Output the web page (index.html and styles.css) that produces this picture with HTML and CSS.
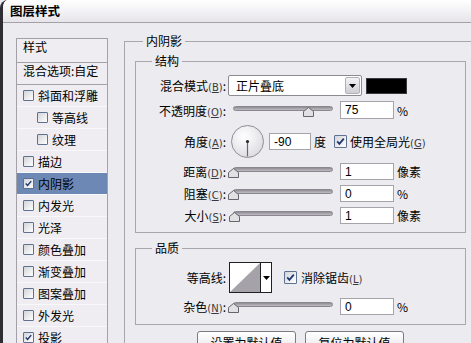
FILE: index.html
```html
<!DOCTYPE html>
<html lang="zh-CN">
<head>
    <meta charset="UTF-8">
    <meta name="viewport" content="width=device-width, initial-scale=1.0">
    <title>图层样式</title>
    <link rel="stylesheet" href="styles.css">
</head>
<body>
    <div class="dialog">
        <div class="titlebar">图层样式</div>
        <div class="content">
            <ul class="style-list">
                <li class="list-head">样式</li>
                <li class="list-blend">混合选项:自定</li>
                <li><span class="check"></span>斜面和浮雕</li>
                <li class="sub"><span class="check"></span>等高线</li>
                <li class="sub"><span class="check"></span>纹理</li>
                <li><span class="check"></span>描边</li>
                <li class="selected"><span class="check"><svg viewBox="0 0 11 11"><path d="M2.2 5.4 L4.4 7.8 L8.8 2.6" /></svg></span>内阴影</li>
                <li><span class="check"></span>内发光</li>
                <li><span class="check"></span>光泽</li>
                <li><span class="check"></span>颜色叠加</li>
                <li><span class="check"></span>渐变叠加</li>
                <li><span class="check"></span>图案叠加</li>
                <li><span class="check"></span>外发光</li>
                <li><span class="check"><svg viewBox="0 0 11 11"><path d="M2.2 5.4 L4.4 7.8 L8.8 2.6" /></svg></span>投影</li>
            </ul>

            <div class="panel">
                <fieldset class="group outer">
                    <legend>内阴影</legend>

                    <fieldset class="group structure">
                        <legend>结构</legend>

                        <div class="row row-blend">
                            <span class="lbl">混合模式<span class="key">(<u>B</u>)</span>:</span>
                            <div class="select">
                                <span class="select-text">正片叠底</span>
                                <span class="select-btn"><svg viewBox="0 0 7 4"><path d="M0 0 H7 L3.5 4 Z" /></svg></span>
                            </div>
                            <span class="swatch"></span>
                        </div>

                        <div class="row row-slider row-opacity">
                            <span class="lbl">不透明度<span class="key">(<u>O</u>)</span>:</span>
                            <div class="slider">
                                <span class="track"></span>
                                <span class="thumb" style="left: 75px"><svg viewBox="0 0 11 10"><path d="M5.5 0.5 L10.5 4.5 V9.5 H0.5 V4.5 Z" /></svg></span>
                            </div>
                            <input class="field" type="text" value="75">
                            <span class="unit">%</span>
                        </div>

                        <div class="row row-angle">
                            <span class="lbl">角度<span class="key">(<u>A</u>)</span>:</span>
                            <svg class="dial" viewBox="0 0 33 33">
                                <defs>
                                    <radialGradient id="dialFill" cx="0.4" cy="0.35" r="0.7">
                                        <stop offset="0" stop-color="#ffffff" />
                                        <stop offset="1" stop-color="#dcdae0" />
                                    </radialGradient>
                                </defs>
                                <circle cx="16.5" cy="16.5" r="16" fill="url(#dialFill)" stroke="#8f8d94" />
                                <line x1="16.5" y1="16.5" x2="16.5" y2="31.5" stroke="#6a686e" stroke-width="1.2" />
                                <circle cx="16.5" cy="16.5" r="1.6" fill="#2a2a2e" />
                            </svg>
                            <input class="field field-angle" type="text" value="-90">
                            <span class="unit">度</span>
                            <span class="check check-lg"><svg viewBox="0 0 11 11"><path d="M2.2 5.4 L4.4 7.8 L8.8 2.6" /></svg></span>
                            <span class="check-label">使用全局光<span class="key">(<u>G</u>)</span></span>
                        </div>

                        <div class="row row-slider row-small">
                            <span class="lbl">距离<span class="key">(<u>D</u>)</span>:</span>
                            <div class="slider">
                                <span class="track"></span>
                                <span class="thumb" style="left: 0px"><svg viewBox="0 0 11 10"><path d="M5.5 0.5 L10.5 4.5 V9.5 H0.5 V4.5 Z" /></svg></span>
                            </div>
                            <input class="field" type="text" value="1">
                            <span class="unit">像素</span>
                        </div>

                        <div class="row row-slider row-small">
                            <span class="lbl">阻塞<span class="key">(<u>C</u>)</span>:</span>
                            <div class="slider">
                                <span class="track"></span>
                                <span class="thumb" style="left: 0px"><svg viewBox="0 0 11 10"><path d="M5.5 0.5 L10.5 4.5 V9.5 H0.5 V4.5 Z" /></svg></span>
                            </div>
                            <input class="field" type="text" value="0">
                            <span class="unit">%</span>
                        </div>

                        <div class="row row-slider row-small">
                            <span class="lbl">大小<span class="key">(<u>S</u>)</span>:</span>
                            <div class="slider">
                                <span class="track"></span>
                                <span class="thumb" style="left: 1px"><svg viewBox="0 0 11 10"><path d="M5.5 0.5 L10.5 4.5 V9.5 H0.5 V4.5 Z" /></svg></span>
                            </div>
                            <input class="field" type="text" value="1">
                            <span class="unit">像素</span>
                        </div>
                    </fieldset>

                    <fieldset class="group quality">
                        <legend>品质</legend>

                        <div class="row row-contour">
                            <span class="lbl">等高线:</span>
                            <div class="contour">
                                <svg class="contour-curve" viewBox="0 0 30 29"><path d="M0 29 L30 0 V29 Z" /></svg>
                                <span class="contour-btn"><svg viewBox="0 0 7 4"><path d="M0 0 H7 L3.5 4 Z" /></svg></span>
                            </div>
                            <span class="check check-lg"><svg viewBox="0 0 11 11"><path d="M2.2 5.4 L4.4 7.8 L8.8 2.6" /></svg></span>
                            <span class="check-label">消除锯齿<span class="key">(<u>L</u>)</span></span>
                        </div>

                        <div class="row row-slider row-small">
                            <span class="lbl">杂色<span class="key">(<u>N</u>)</span>:</span>
                            <div class="slider">
                                <span class="track"></span>
                                <span class="thumb" style="left: 0px"><svg viewBox="0 0 11 10"><path d="M5.5 0.5 L10.5 4.5 V9.5 H0.5 V4.5 Z" /></svg></span>
                            </div>
                            <input class="field" type="text" value="0">
                            <span class="unit">%</span>
                        </div>
                    </fieldset>

                    <div class="buttons">
                        <button>设置为默认值</button>
                        <button>复位为默认值</button>
                    </div>
                </fieldset>
            </div>
        </div>
    </div>
</body>
</html>
```

FILE: styles.css
```css
* { box-sizing: border-box; }
html, body { margin: 0; padding: 0; }
body {
    width: 471px;
    height: 343px;
    overflow: hidden;
    background: #ecebef;
    font-family: "Noto Sans CJK SC", "Noto Sans", sans-serif;
    font-size: 12px;
    color: #000;
}
.dialog {
    height: 343px;
    overflow: hidden;
    border-left: 3px solid #2f2d31;
    border-top-left-radius: 8px;
    background: #ecebef;
}
.titlebar {
    height: 23px;
    padding-left: 7px;
    line-height: 22px;
    font-size: 12.5px;
    font-weight: bold;
    background: linear-gradient(#ffffff, #e6e4e9);
    border-bottom: 1px solid #a4a2a8;
}
.content {
    display: flex;
    align-items: flex-start;
    padding: 10px 0 0 13px;
}

/* left list */
.style-list {
    list-style: none;
    margin: 5px 0 0 0;
    padding: 0;
    width: 92px;
    height: 320px;
    flex: none;
    border: 1px solid #a3a1a7;
    background: #efedf1;
}
.style-list li {
    display: flex;
    align-items: center;
    height: 22px;
    padding-left: 6px;
    border-bottom: 1px solid #f8f7fa;
    white-space: nowrap;
}
.style-list li.sub { padding-left: 20px; }
.style-list li.list-head {
    height: 24px;
    align-items: flex-start;
    line-height: 15px;
    border-bottom: 1px solid #a3a1a7;
}
.style-list li.list-blend {
    align-items: flex-start;
    line-height: 16px;
    border-bottom: 1px solid #a3a1a7;
}
.style-list li.selected { background: #6d88b4; }

.check {
    display: inline-block;
    flex: none;
    width: 11px;
    height: 11px;
    margin-right: 4px;
    border: 1px solid #5f7190;
    border-radius: 1px;
    background: linear-gradient(135deg, #d3d4da, #ffffff);
}
.check svg { display: block; width: 100%; height: 100%; }
.check path { fill: none; stroke: #20386e; stroke-width: 1.8; }
.check-lg { width: 13px; height: 13px; }

/* right panel */
.panel { margin-left: 16px; flex: none; }
.group {
    margin: 0;
    min-width: 0;
    border: 1px solid #a9a7ad;
}
.group legend {
    padding: 0 3px;
    line-height: 16px;
    font-size: 12px;
}
.outer {
    width: 358px;
    height: 330px;
    padding: 4px 15px 0 10px;
}
.outer > legend { margin-left: 8px; }
.structure, .quality {
    width: 331px;
    padding: 6px 0 8px 0;
}
.structure > legend, .quality > legend { margin-left: 16px; }
.quality { margin-top: 7px; padding-bottom: 9px; }

.row {
    display: flex;
    align-items: center;
    white-space: nowrap;
}
.lbl {
    width: 90px;
    flex: none;
    text-align: right;
    margin-right: 2px;
}
.key {
    font-family: "DejaVu Sans", sans-serif;
    font-size: 10px;
    color: #3a3a3e;
}
.row-blend { height: 21px; }
.row-opacity { height: 18px; margin-top: 5px; }
.row-angle { height: 31px; margin-top: 7px; }
.row-small { height: 17px; margin-top: 5px; }
.row-angle + .row-small { margin-top: 6px; }

.select {
    display: flex;
    align-items: stretch;
    width: 134px;
    height: 21px;
    border: 1px solid #8d8b92;
    border-radius: 2px;
    background: #fff;
}
.select-text {
    flex: 1;
    padding-left: 7px;
    line-height: 19px;
}
.select-btn {
    display: flex;
    align-items: center;
    justify-content: center;
    width: 15px;
    margin: 1px;
    border: 1px solid #b3b1b8;
    border-radius: 2px;
    background: linear-gradient(#f4f3f6, #cfcdd4);
}
.select-btn svg, .contour-btn svg { width: 7px; height: 4px; }
.select-btn path, .contour-btn path { fill: #000; }
.swatch {
    width: 41px;
    height: 16px;
    margin-left: 4px;
    background: #000;
    border: 1px solid #3a3a3e;
}

.slider {
    position: relative;
    width: 111px;
    height: 17px;
    flex: none;
}
.track {
    position: absolute;
    left: 5px;
    right: 6px;
    top: 4px;
    height: 5px;
    border-radius: 3px;
    border: 1px solid #8a888e;
    background: linear-gradient(#8f8d93, #bfbdc3);
}
.thumb {
    position: absolute;
    top: 5px;
    width: 11px;
    height: 10px;
}
.thumb svg { display: block; width: 11px; height: 10px; }
.thumb path { fill: #e1e0e4; stroke: #67656b; stroke-width: 1; }

.field {
    width: 54px;
    height: 17px;
    margin: 0 0 0 1px;
    padding: 0 4px;
    border: 1px solid #a6a4aa;
    background: #fff;
    font-family: "Liberation Sans", Arial, sans-serif;
    font-size: 12px;
    color: #000;
    outline: none;
}
.row-opacity .field { height: 18px; }
.unit { margin-left: 3px; }

.dial {
    width: 33px;
    height: 33px;
    flex: none;
    margin-left: 3px;
}
.field-angle {
    width: 42px;
    margin-left: 5px;
}
.row-angle .unit { margin-left: 3px; margin-right: 8px; }
.row-angle .check { margin-right: 3px; }

.row-contour { height: 31px; }
.contour {
    display: flex;
    width: 43px;
    height: 31px;
    margin-left: 1px;
    border: 1px solid #202022;
    background: #fff;
}
.contour-curve {
    width: 30px;
    height: 29px;
    display: block;
}
.contour-curve path { fill: #a6a2aa; }
.contour-btn {
    display: flex;
    align-items: center;
    justify-content: center;
    flex: 1;
    border-left: 1px solid #202022;
}
.row-contour .check { margin-left: 12px; }
.quality .row-small { margin-top: 5px; }

.buttons {
    display: flex;
    justify-content: center;
    gap: 9px;
    margin-top: 6px;
}
.buttons button {
    width: 99px;
    height: 23px;
    padding: 0;
    border: 1px solid #7d7b82;
    border-radius: 3px;
    background: linear-gradient(#ffffff, #e4e2e8);
    font-family: "Noto Sans CJK SC", sans-serif;
    font-size: 12px;
    color: #000;
}
```
